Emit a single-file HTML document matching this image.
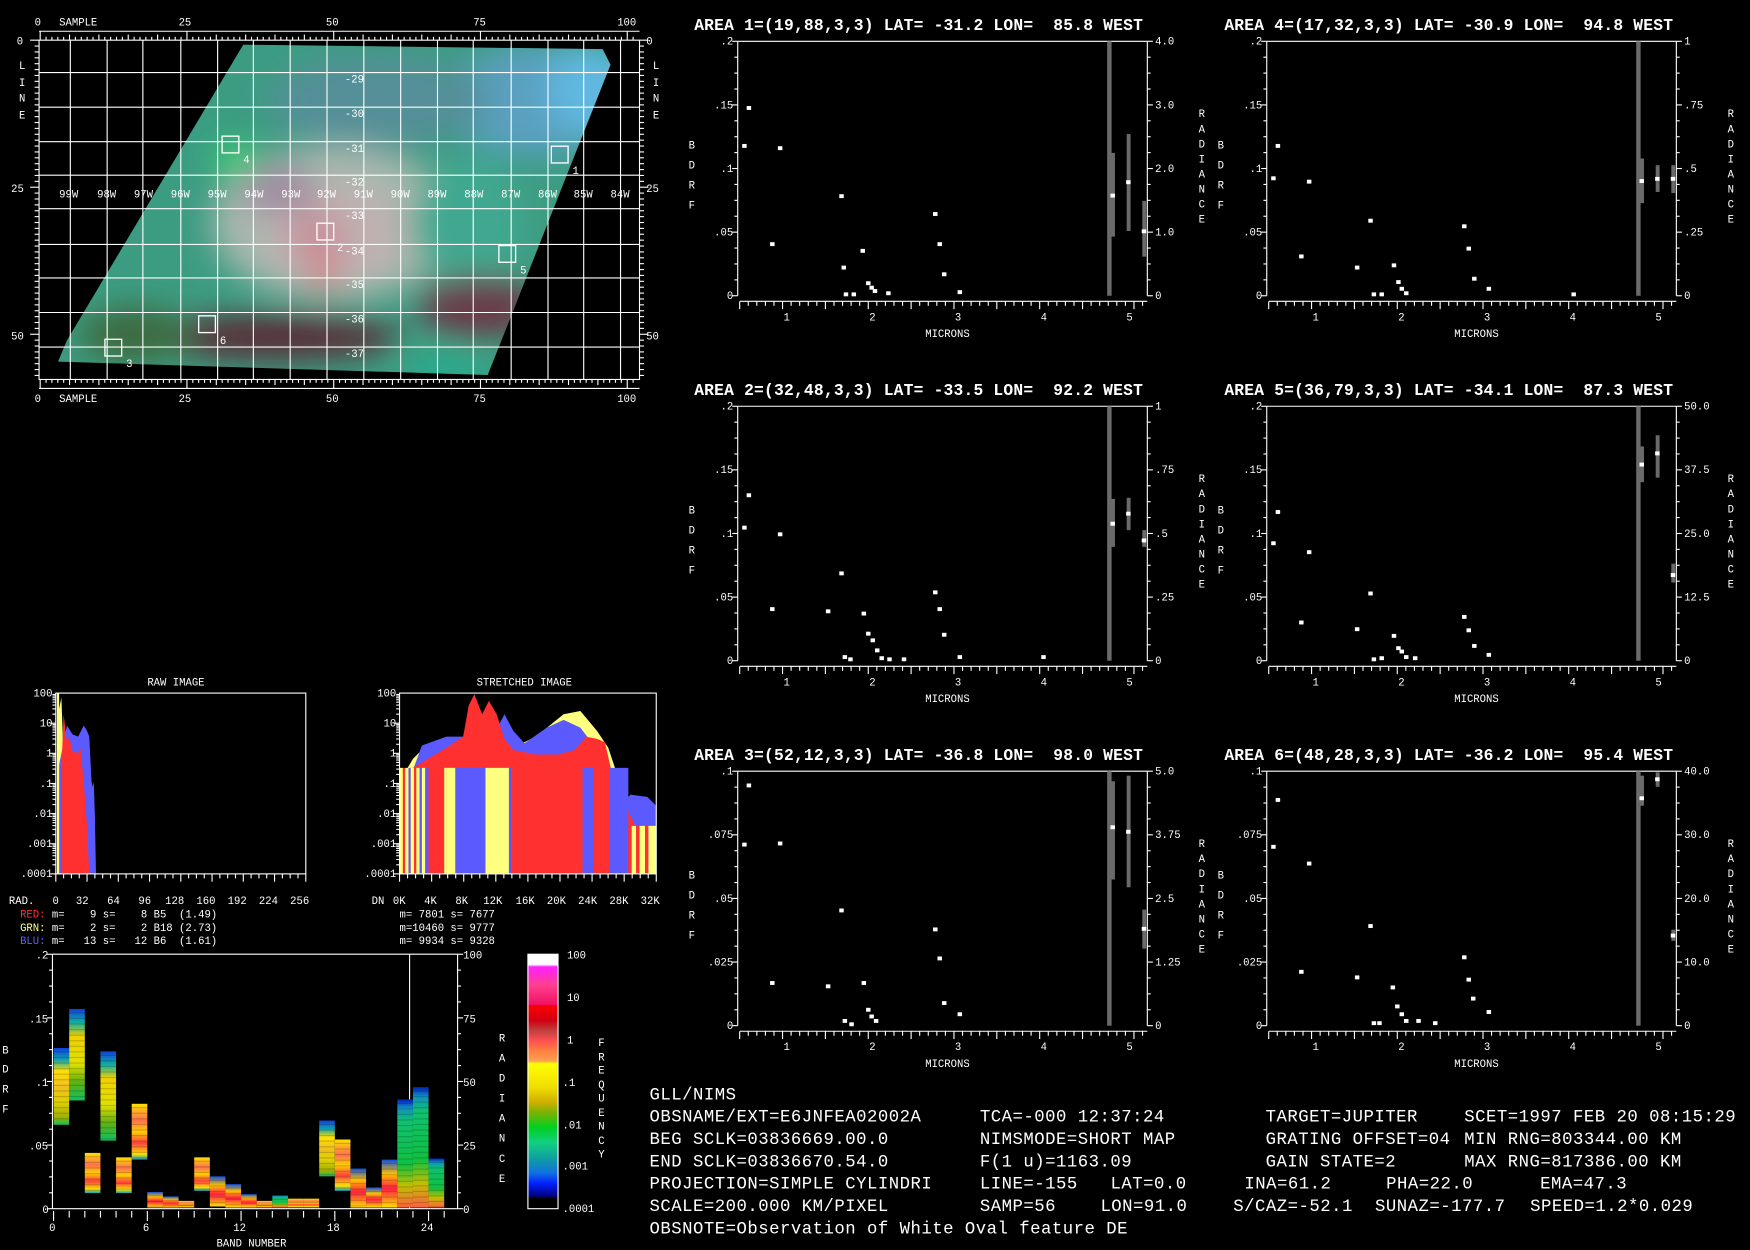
<!DOCTYPE html>
<html><head><meta charset="utf-8"><style>
html,body{margin:0;padding:0;background:#000;width:1750px;height:1250px;overflow:hidden}
svg{display:block}
text{font-family:"Liberation Mono","DejaVu Sans Mono",monospace;fill:#fff}
.s{font-size:9.5px}
.t{font-size:14.6px;font-weight:bold}
.b{font-size:15.5px;letter-spacing:0.45px}
</style></head><body>
<svg id="sv" width="1750" height="1250" viewBox="0 0 1568 1120" xmlns="http://www.w3.org/2000/svg">
<defs>
<clipPath id="cp"><polygon points="218,40 540,44 547,58 437,336 52,324 60,305"/></clipPath>
<filter id="bl" x="-50%" y="-50%" width="200%" height="200%"><feGaussianBlur stdDeviation="14"/></filter>
<linearGradient id="cb" x1="0" y1="0" x2="0" y2="1">
<stop offset="0" stop-color="#fff"/><stop offset=".04" stop-color="#fff"/><stop offset=".05" stop-color="#ff20ff"/>
<stop offset=".12" stop-color="#ff4090"/><stop offset=".2" stop-color="#f01060"/><stop offset=".2" stop-color="#ff0000"/>
<stop offset=".26" stop-color="#d00010"/><stop offset=".3" stop-color="#c04040"/><stop offset=".34" stop-color="#ff5050"/>
<stop offset=".38" stop-color="#ff8040"/><stop offset=".42" stop-color="#ffa050"/><stop offset=".43" stop-color="#ffff00"/>
<stop offset=".52" stop-color="#f0e000"/><stop offset=".58" stop-color="#d0b000"/><stop offset=".62" stop-color="#80b000"/>
<stop offset=".68" stop-color="#00d020"/><stop offset=".74" stop-color="#10d080"/><stop offset=".8" stop-color="#10a0a0"/>
<stop offset=".86" stop-color="#1070e0"/><stop offset=".9" stop-color="#0020ff"/><stop offset=".95" stop-color="#000080"/>
<stop offset=".96" stop-color="#000"/><stop offset="1" stop-color="#000"/></linearGradient>
<linearGradient id="gY" x1="0" y1="0" x2="0" y2="1"><stop offset="0" stop-color="#1040e0"/><stop offset=".15" stop-color="#10a0b0"/><stop offset=".3" stop-color="#ffe000"/><stop offset=".5" stop-color="#f0c020"/><stop offset=".7" stop-color="#e0d000"/><stop offset=".9" stop-color="#a0b000"/><stop offset="1" stop-color="#10c060"/></linearGradient>
<linearGradient id="gB" x1="0" y1="0" x2="0" y2="1"><stop offset="0" stop-color="#1040e0"/><stop offset=".15" stop-color="#10b0a0"/><stop offset=".3" stop-color="#f0d000"/><stop offset=".6" stop-color="#e0e000"/><stop offset=".8" stop-color="#60b010"/><stop offset="1" stop-color="#10c060"/></linearGradient>
<linearGradient id="gR" x1="0" y1="0" x2="0" y2="1"><stop offset="0" stop-color="#ffe000"/><stop offset=".3" stop-color="#ff7050"/><stop offset=".5" stop-color="#ffd000"/><stop offset=".7" stop-color="#ff4040"/><stop offset=".9" stop-color="#ffe000"/><stop offset="1" stop-color="#10a0c0"/></linearGradient>
<linearGradient id="gL" x1="0" y1="0" x2="0" y2="1"><stop offset="0" stop-color="#1050e0"/><stop offset=".3" stop-color="#ffc000"/><stop offset=".6" stop-color="#ff2040"/><stop offset="1" stop-color="#ffe000"/></linearGradient>
<linearGradient id="gG" x1="0" y1="0" x2="0" y2="1"><stop offset="0" stop-color="#0020c0"/><stop offset=".08" stop-color="#1090c0"/><stop offset=".2" stop-color="#10c070"/><stop offset=".6" stop-color="#10c040"/><stop offset=".8" stop-color="#c0c000"/><stop offset="1" stop-color="#ff6040"/></linearGradient>
</defs>

<!-- MAP -->
<g clip-path="url(#cp)">
<rect x="40" y="30" width="520" height="320" fill="#3c9c82"/>
<g filter="url(#bl)">
<ellipse cx="480" cy="90" rx="80" ry="50" fill="#5aa0c0"/>
<ellipse cx="530" cy="80" rx="40" ry="40" fill="#60b8e0"/>
<ellipse cx="340" cy="90" rx="100" ry="40" fill="#558f98"/>
<ellipse cx="300" cy="200" rx="110" ry="70" fill="#a8b8ae"/>
<ellipse cx="300" cy="210" rx="60" ry="45" fill="#c0b0b0"/>
<ellipse cx="285" cy="215" rx="25" ry="25" fill="#c8909a"/>
<ellipse cx="290" cy="248" rx="12" ry="12" fill="#d87878"/>
<ellipse cx="250" cy="170" rx="35" ry="22" fill="#a08ca0"/>
<ellipse cx="420" cy="200" rx="50" ry="60" fill="#40a890"/>
<ellipse cx="430" cy="275" rx="55" ry="28" fill="#6a3a48"/>
<ellipse cx="250" cy="302" rx="110" ry="20" fill="#5a2a34"/>
<ellipse cx="120" cy="300" rx="50" ry="25" fill="#3c6a40"/>
<ellipse cx="400" cy="328" rx="40" ry="12" fill="#20b090"/>
<ellipse cx="210" cy="142" rx="20" ry="15" fill="#30d070"/>
</g>
</g>
<g id="mapg" stroke="#fff" fill="none" stroke-width="1">
<rect x="35" y="36" width="538" height="304"/>
</g>
<g class="s">
<text x="31" y="23">0</text><text x="53" y="23">SAMPLE</text><text x="160" y="23">25</text><text x="292" y="23">50</text><text x="424" y="23">75</text><text x="553" y="23">100</text>
<text x="31" y="360">0</text><text x="53" y="360">SAMPLE</text><text x="160" y="360">25</text><text x="292" y="360">50</text><text x="424" y="360">75</text><text x="553" y="360">100</text>
<text x="15" y="40">0</text><text x="10" y="172">25</text><text x="10" y="304">50</text>
<text x="579" y="40">0</text><text x="579" y="172">25</text><text x="579" y="304">50</text>
<text x="17" y="62">L</text><text x="17" y="77">I</text><text x="17" y="91">N</text><text x="17" y="106">E</text>
<text x="585" y="62">L</text><text x="585" y="77">I</text><text x="585" y="91">N</text><text x="585" y="106">E</text>
</g>
<g class="s" id="latlon"></g>
<g stroke="#fff" fill="none" stroke-width="1.2">
<rect x="199" y="122" width="15" height="15"/><rect x="494" y="131" width="15" height="15"/><rect x="284" y="200" width="15" height="15"/>
<rect x="447" y="220" width="15" height="15"/><rect x="178" y="283" width="15" height="15"/><rect x="94" y="304" width="15" height="15"/>
</g>
<g class="s"><text x="218" y="146">4</text><text x="513" y="156">1</text><text x="302" y="225">2</text><text x="466" y="245">5</text><text x="197" y="308">6</text><text x="113" y="329">3</text></g>

<!-- SPECTRA PANELS -->
<g class="t">
<text x="622" y="27" textLength="402" xml:space="preserve">AREA 1=(19,88,3,3) LAT= -31.2 LON=  85.8 WEST</text>
<text x="1097" y="27" textLength="402" xml:space="preserve">AREA 4=(17,32,3,3) LAT= -30.9 LON=  94.8 WEST</text>
<text x="622" y="354" textLength="402" xml:space="preserve">AREA 2=(32,48,3,3) LAT= -33.5 LON=  92.2 WEST</text>
<text x="1097" y="354" textLength="402" xml:space="preserve">AREA 5=(36,79,3,3) LAT= -34.1 LON=  87.3 WEST</text>
<text x="622" y="681" textLength="402" xml:space="preserve">AREA 3=(52,12,3,3) LAT= -36.8 LON=  98.0 WEST</text>
<text x="1097" y="681" textLength="402" xml:space="preserve">AREA 6=(48,28,3,3) LAT= -36.2 LON=  95.4 WEST</text>
</g>
<g id="panels"></g>

<!-- HISTOGRAMS -->
<text class="s" x="132" y="614">RAW IMAGE</text>
<text class="s" x="427" y="614">STRETCHED IMAGE</text>
<g>
<polygon points="52,783 52,640 55,625 57,680 60,783" fill="#ffff80"/>
<polygon points="52,783 52,690 56,670 60,650 65,658 70,660 75,650 78,655 80,660 82,700 83,705 84,700 85,730 86,783" fill="#5a5aff"/>
<polygon points="55,783 55,690 57,640 60,665 62,660 65,673 70,675 72,670 75,700 78,740 80,783" fill="#ff3030"/>
<rect x="51" y="621" width="2" height="162" fill="#ffff80"/>
</g>
<g>
<polygon points="358,783 358,700 370,680 380,670 395,668 410,663 430,655 440,676 460,670 480,660 495,648 505,640 520,637 535,655 545,670 555,700 565,735 575,752 588,768 588,783" fill="#ffff80"/>
<polygon points="358,783 358,700 370,690 378,668 400,660 420,660 430,663 440,663 452,640 460,655 470,666 490,652 505,645 520,652 530,665 545,685 555,722 565,712 580,714 588,722 588,783" fill="#5a5aff"/>
<polygon points="358,783 358,695 380,682 400,670 415,660 420,632 425,622 432,640 438,628 445,640 452,662 460,672 480,676 500,676 515,672 525,660 535,662 542,665 550,700 560,720 570,742 575,783" fill="#ff3030"/>
<g id="stripes"></g>
</g>
<g class="s">
<text x="8" y="810">RAD.</text><text x="47" y="810">0</text><text x="68" y="810">32</text><text x="96" y="810">64</text><text x="124" y="810">96</text><text x="148" y="810">128</text><text x="176" y="810">160</text><text x="204" y="810">192</text><text x="232" y="810">224</text><text x="260" y="810">256</text>
<text x="333" y="810">DN</text><text x="352" y="810">0K</text><text x="380" y="810">4K</text><text x="408" y="810">8K</text><text x="433" y="810">12K</text><text x="462" y="810">16K</text><text x="490" y="810">20K</text><text x="518" y="810">24K</text><text x="546" y="810">28K</text><text x="574" y="810">32K</text>
<text x="18" y="822" xml:space="preserve"><tspan fill="#ff3030">RED:</tspan> m=    9 s=    8 B5  (1.49)</text>
<text x="18" y="834" xml:space="preserve"><tspan fill="#ffff80">GRN:</tspan> m=    2 s=    2 B18 (2.73)</text>
<text x="18" y="846" xml:space="preserve"><tspan fill="#6060ff">BLU:</tspan> m=   13 s=   12 B6  (1.61)</text>
<text x="358" y="822" xml:space="preserve">m= 7801 s= 7677</text>
<text x="358" y="834" xml:space="preserve">m=10460 s= 9777</text>
<text x="358" y="846" xml:space="preserve">m= 9934 s= 9328</text>
</g>
<g id="hax"></g>

<!-- BAND PLOT -->
<g id="bars"></g>
<rect x="473" y="855" width="27" height="228" fill="url(#cb)" stroke="#fff" stroke-width="1"/>
<g class="s">
<text x="508" y="859">100</text><text x="508" y="897">10</text><text x="508" y="935">1</text><text x="504" y="973">.1</text><text x="504" y="1011">.01</text><text x="504" y="1048">.001</text><text x="504" y="1086">.0001</text>
<text x="536" y="937">F</text><text x="536" y="950">R</text><text x="536" y="962">E</text><text x="536" y="975">Q</text><text x="536" y="987">U</text><text x="536" y="1000">E</text><text x="536" y="1012">N</text><text x="536" y="1025">C</text><text x="536" y="1037">Y</text>
<text x="447" y="933">R</text><text x="447" y="951">A</text><text x="447" y="969">D</text><text x="447" y="987">I</text><text x="447" y="1005">A</text><text x="447" y="1023">N</text><text x="447" y="1041">C</text><text x="447" y="1059">E</text>
<text x="2" y="944">B</text><text x="2" y="961">D</text><text x="2" y="979">R</text><text x="2" y="997">F</text>
<text x="32" y="859">.2</text><text x="26" y="916">.15</text><text x="32" y="973">.1</text><text x="26" y="1030">.05</text><text x="38" y="1087">0</text>
<text x="415" y="859">100</text><text x="415" y="916">75</text><text x="415" y="973">50</text><text x="415" y="1030">25</text><text x="415" y="1087">0</text>
<text x="44" y="1103">0</text><text x="128" y="1103">6</text><text x="209" y="1103">12</text><text x="293" y="1103">18</text><text x="377" y="1103">24</text>
<text x="194" y="1117">BAND NUMBER</text>
</g>

<!-- INFO TEXT -->
<g class="b">
<text x="582" y="985">GLL/NIMS</text>
<text x="582" y="1005">OBSNAME/EXT=E6JNFEA02002A</text><text x="878" y="1005">TCA=-000 12:37:24</text><text x="1134" y="1005">TARGET=JUPITER</text><text x="1312" y="1005">SCET=1997 FEB 20 08:15:29</text>
<text x="582" y="1025">BEG SCLK=03836669.00.0</text><text x="878" y="1025">NIMSMODE=SHORT MAP</text><text x="1134" y="1025">GRATING OFFSET=04</text><text x="1312" y="1025">MIN RNG=803344.00 KM</text>
<text x="582" y="1045">END SCLK=03836670.54.0</text><text x="878" y="1045">F(1 u)=1163.09</text><text x="1134" y="1045">GAIN STATE=2</text><text x="1312" y="1045">MAX RNG=817386.00 KM</text>
<text x="582" y="1065">PROJECTION=SIMPLE CYLINDRI</text><text x="878" y="1065">LINE=-155</text><text x="995" y="1065">LAT=0.0</text><text x="1115" y="1065">INA=61.2</text><text x="1242" y="1065">PHA=22.0</text><text x="1380" y="1065">EMA=47.3</text>
<text x="582" y="1085">SCALE=200.000 KM/PIXEL</text><text x="878" y="1085">SAMP=56</text><text x="986" y="1085">LON=91.0</text><text x="1105" y="1085">S/CAZ=-52.1</text><text x="1232" y="1085">SUNAZ=-177.7</text><text x="1371" y="1085">SPEED=1.2*0.029</text>
<text x="582" y="1105">OBSNOTE=Observation of White Oval feature DE</text>
</g>
</svg>
<script>
(function(){
var NS="http://www.w3.org/2000/svg";
function el(p,n,a,t){var e=document.createElementNS(NS,n);for(var k in a)e.setAttribute(k,a[k]);if(t!=null)e.textContent=t;p.appendChild(e);return e;}
var g=document.getElementById("mapg");
[63,96,128,162,195,227,260,293,326,359,392,424,458,491,523,556].forEach(function(x){el(g,"line",{x1:x,y1:36,x2:x,y2:340});});
[65,96,127,157,187,219,249,280,311].forEach(function(y){el(g,"line",{x1:35,y1:y,x2:573,y2:y});});
for(var i=0;i<=101;i++){var x=36+i*5.26;var L=(i%25==0)?8:(i%5==0?5:3);el(g,"line",{x1:x,y1:36,x2:x,y2:36-L});el(g,"line",{x1:x,y1:340,x2:x,y2:340+L});}
el(g,"line",{x1:35,y1:28,x2:573,y2:28});el(g,"line",{x1:35,y1:348,x2:573,y2:348});
for(var j=0;j<=57;j++){var y=36+j*5.27;var L2=(j%25==0)?8:4;el(g,"line",{x1:35,y1:y,x2:35-L2,y2:y});el(g,"line",{x1:573,y1:y,x2:573+L2,y2:y});}
var ll=document.getElementById("latlon");
var lats=["-29","-30","-31","-32","-33","-34","-35","-36","-37"],ly=[65,96,127,157,187,219,249,280,311];
lats.forEach(function(t,k){el(ll,"text",{x:309,y:ly[k]+9},t);});
var lons=[59,93,126,159,192,225,258,290,323,356,389,422,455,488,520,553];
lons.forEach(function(x,k){el(ll,"text",{x:x-6,y:177},(99-k)+"W");});

var P=document.getElementById("panels");
function panel(ox,oy,left,right,pts,bars){
 var x0=ox+661,x1=ox+1028,y0=oy+37,y1=oy+265;
 el(P,"line",{x1:x0,y1:y0,x2:x1,y2:y0,stroke:"#fff"});
 el(P,"line",{x1:x0,y1:y0,x2:x0,y2:y1,stroke:"#fff"});
 el(P,"line",{x1:x1,y1:y0,x2:x1,y2:y1,stroke:"#fff"});
 el(P,"line",{x1:x0+2,y1:y1+5,x2:x1,y2:y1+5,stroke:"#fff"});
 for(var i=0;i<=16;i++){var y=y0+i*(y1-y0)/16;var L=(i%4==0)?5:3;el(P,"line",{x1:x0,y1:y,x2:x0-L,y2:y,stroke:"#fff"});el(P,"line",{x1:x1,y1:y,x2:x1+L,y2:y,stroke:"#fff"});}
 for(var m=0.45;m<=5.2;m+=0.1){var xx=ox+705+(m-1)*76.8;if(xx>x1+1)break;var mm=Math.round(m*10);var L3=(mm%5==0)?7:4;el(P,"line",{x1:xx,y1:y1+5,x2:xx,y2:y1+5+L3,stroke:"#fff"});}
 for(var k=1;k<=5;k++)el(P,"text",{x:ox+702+(k-1)*76.8,y:oy+287,"class":"s"},String(k));
 el(P,"text",{x:ox+829,y:oy+302,"class":"s"},"MICRONS");
 for(k=0;k<5;k++){el(P,"text",{x:x0-4,y:y0+3+k*57,"class":"s","text-anchor":"end"},left[k]);el(P,"text",{x:x1+7,y:y0+3+k*57,"class":"s"},right[k]);}
 "BDRF".split("").forEach(function(c,k){el(P,"text",{x:ox+617,y:oy+133+k*18,"class":"s"},c);});
 "RADIANCE".split("").forEach(function(c,k){el(P,"text",{x:ox+1074,y:oy+105+k*13.5,"class":"s"},c);});
 el(P,"rect",{x:ox+992,y:y0,width:4,height:y1-y0,fill:"#6a6a6a"});
 bars.forEach(function(b){el(P,"rect",{x:ox+b[0]-1.5,y:oy+b[1],width:3.5,height:b[2]-b[1],fill:"#6a6a6a"});el(P,"rect",{x:ox+b[0]-2,y:oy+b[3]-1.5,width:4,height:3.5,fill:"#fff"});});
 pts.forEach(function(p){el(P,"rect",{x:ox+p[0]-2,y:oy+p[1]-2,width:4,height:3.5,fill:"#fff"});});
}
panel(0,0,[".2",".15",".1",".05","0"],["4.0","3.0","2.0","1.0","0"],
[[667,131],[671,97],[692,219],[699,133],[754,176],[756,240],[758,264],[765,264],[773,225],[778,254],[781,258],[784,261],[796,263],[838,192],[842,219],[846,246],[860,262]],
[[997,137,212,175],[1011,120,207,163],[1025,180,230,207]]);
panel(0,327,[".2",".15",".1",".05","0"],["1",".75",".5",".25","0"],
[[667,146],[671,117],[692,219],[699,152],[742,221],[754,187],[757,262],[762,264],[774,223],[778,241],[782,247],[786,256],[790,263],[797,264],[810,264],[838,204],[842,219],[846,242],[860,262],[935,262]],
[[997,120,163,142],[1011,119,148,133],[1025,148,163,157]]);
panel(0,654,[".1",".075",".05",".025","0"],["5.0","3.75","2.5","1.25","0"],
[[667,103],[671,50],[692,227],[699,102],[742,230],[754,162],[757,261],[763,264],[774,227],[778,251],[781,257],[785,261],[838,179],[842,205],[846,245],[860,255]],
[[997,46,134,87],[1011,41,141,91],[1025,161,196,178]]);
panel(474,0,[".2",".15",".1",".05","0"],["1",".75",".5",".25","0"],
[[667,160],[671,131],[692,230],[699,163],[742,240],[754,198],[757,264],[764,264],[775,238],[779,253],[782,259],[786,263],[838,203],[842,223],[847,250],[860,259],[936,264]],
[[997,142,182,162],[1011,148,172,160],[1025,148,173,160]]);
panel(474,327,[".2",".15",".1",".05","0"],["50.0","37.5","25.0","12.5","0"],
[[667,160],[671,132],[692,231],[699,168],[742,237],[754,205],[757,264],[764,263],[775,243],[779,254],[782,257],[786,262],[794,263],[838,226],[842,238],[847,252],[860,260]],
[[997,73,105,89],[1011,63,101,79],[1025,178,195,188]]);
panel(474,654,[".1",".075",".05",".025","0"],["40.0","30.0","20.0","10.0","0"],
[[667,105],[671,63],[692,217],[699,120],[742,222],[754,176],[757,263],[762,263],[774,231],[778,248],[782,255],[786,261],[797,261],[812,263],[838,204],[842,224],[846,241],[860,253]],
[[997,41,68,61],[1011,38,51,44],[1025,179,189,184]]);

var H=document.getElementById("hax");
function hist(x0,x1){
 el(H,"rect",{x:x0,y:621,width:x1-x0,height:162,fill:"none",stroke:"#fff"});
 for(var d=0;d<6;d++){for(var s=1;s<10;s++){var y=783-d*27-Math.log10(s)*27;var L=(s==1)?5:3;el(H,"line",{x1:x0,y1:y,x2:x0-L,y2:y,stroke:"#fff"});}}
 for(var i=0;i<=32;i++){var x=x0+i*(x1-x0)/32;el(H,"line",{x1:x,y1:783,x2:x,y2:(i%4==0)?790:787,stroke:"#fff"});}
 var ls=["100","10","1",".1",".01",".001",".0001"];
 ls.forEach(function(t,k){el(H,"text",{x:x0-3,y:624+k*27,"class":"s","text-anchor":"end"},t);});
}
hist(50,274);hist(358,588);
var S=document.getElementById("stripes");
var st=[[358,361,"#ffff80"],[361,363,"#ff3030"],[363,366,"#ffff80"],[366,368,"#5a5aff"],[368,371,"#ffff80"],[371,373,"#ff3030"],[373,376,"#ffff80"],[376,378,"#5a5aff"],[378,381,"#ffff80"],[381,384,"#5a5aff"],[384,398,"#ff3030"],[398,400,"#ffff80"],[400,408,"#ffff80"],[408,435,"#5a5aff"],[435,456,"#ffff80"],[456,458,"#5a5aff"],[458,522,"#ff3030"],[522,532,"#5a5aff"],[532,546,"#ff3030"],[546,563,"#5a5aff"],[563,566,"#ff3030"],[566,570,"#ffff80"],[570,573,"#ff3030"],[573,578,"#ffff80"],[578,581,"#ff3030"],[581,588,"#ffff80"]];
st.forEach(function(s){var top=(s[0]>=563)?740:688;el(S,"rect",{x:s[0],y:top,width:s[1]-s[0],height:783-top,fill:s[2]});});

var B=document.getElementById("bars");
el(B,"line",{x1:47,y1:855,x2:410,y2:855,stroke:"#fff"});
el(B,"line",{x1:47,y1:855,x2:47,y2:1083,stroke:"#fff"});
el(B,"line",{x1:410,y1:855,x2:410,y2:1083,stroke:"#fff"});
el(B,"line",{x1:367,y1:855,x2:367,y2:1083,stroke:"#fff"});
el(B,"line",{x1:47,y1:1083,x2:410,y2:1083,stroke:"#fff"});
for(var i2=0;i2<=16;i2++){var yy=855+i2*228/16;var Lb=(i2%4==0)?5:3;el(B,"line",{x1:47,y1:yy,x2:47-Lb,y2:yy,stroke:"#fff"});el(B,"line",{x1:410,y1:yy,x2:410+Lb,y2:yy,stroke:"#fff"});}
for(i2=0;i2<=25;i2++){var xb=48+i2*14;el(B,"line",{x1:xb,y1:1085,x2:xb,y2:(i2%6==0)?1094:1091,stroke:"#fff"});}
var bd=[[0,939,1008,"gY"],[1,904,986,"gB"],[2,1033,1069,"gR"],[3,942,1022,"gB"],[4,1037,1069,"gR"],[5,989,1039,"gR"],[6,1068,1082,"gL"],[7,1072,1082,"gL"],[8,1076,1082,"gR"],[9,1037,1067,"gR"],[10,1054,1081,"gL"],[11,1061,1082,"gL"],[12,1070,1082,"gL"],[13,1076,1082,"gR"],[14,1071,1082,"gG"],[15,1074,1082,"gR"],[16,1074,1082,"gR"],[17,1004,1054,"gY"],[18,1021,1067,"gR"],[19,1047,1082,"gL"],[20,1064,1082,"gL"],[21,1039,1082,"gL"],[22,985,1082,"gG"],[23,974,1082,"gG"],[24,1038,1082,"gG"]];
bd.forEach(function(b){el(B,"rect",{x:48+b[0]*14,y:b[1],width:14,height:b[2]-b[1],fill:"url(#"+b[3]+")"});
 for(var q=b[1]+3;q<b[2];q+=5){el(B,"rect",{x:48+b[0]*14,y:q,width:14,height:1,fill:"rgba(0,0,0,0.18)"});}});
})();
</script>
</body></html>
